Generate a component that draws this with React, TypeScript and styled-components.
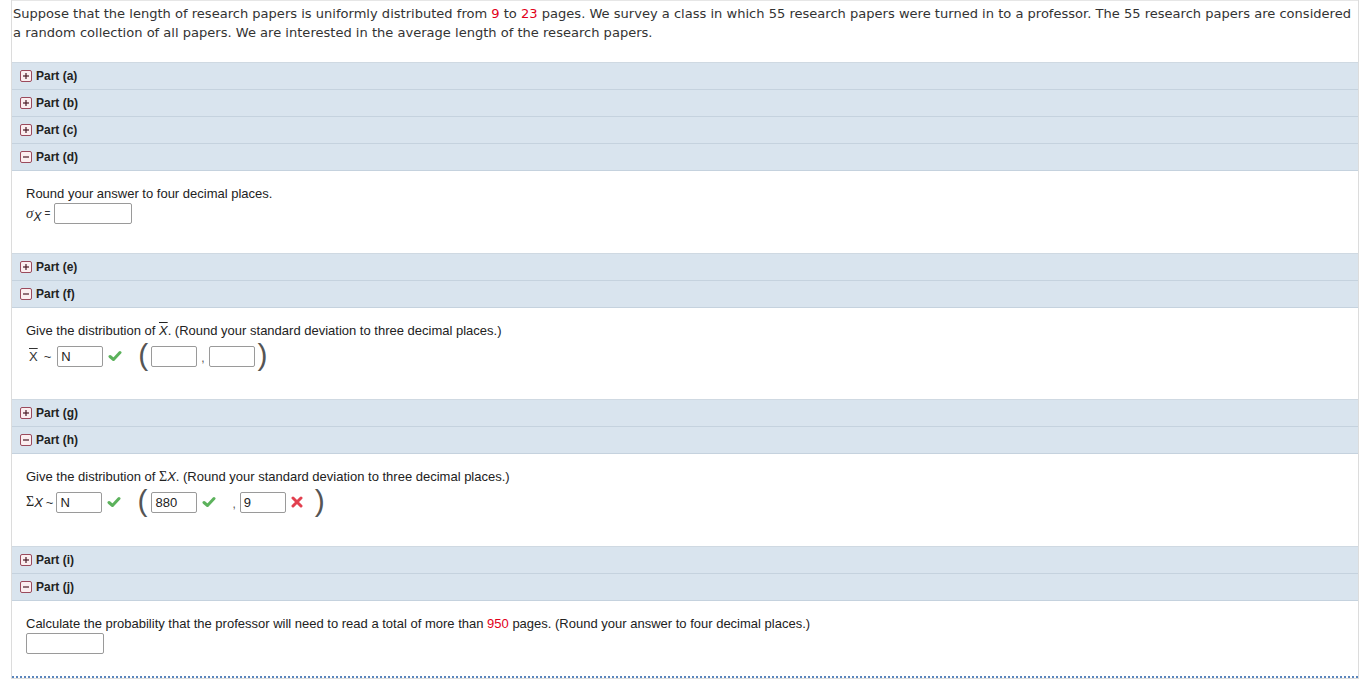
import React from "react";
import styled, { createGlobalStyle } from "styled-components";

const GlobalStyle = createGlobalStyle`
  html, body {
    margin: 0;
    padding: 0;
    background: #fff;
  }
`;

const Page = styled.div`
  margin-left: 11px;
  width: 1348px;
  border: 1px solid #dcdcdc;
  border-top: none;
  box-sizing: border-box;
`;

const Intro = styled.div`
  font-family: "DejaVu Sans", Verdana, sans-serif;
  font-size: 13.05px;
  line-height: 19px;
  color: #333;
  padding: 3px 2px 0 1px;
  height: 58px;
  border-top: 1px solid #e6e6e6;
  border-bottom: 1px solid #cfd9e2;
`;

const Red = styled.span`
  color: #e2001a;
`;

const PartHead = styled.div`
  display: flex;
  align-items: center;
  gap: 4px;
  height: 26px;
  padding-left: 8px;
  background: #d9e4ee;
  border-bottom: 1px solid #c5d2de;
  font-family: "Liberation Sans", Arial, sans-serif;
  font-weight: bold;
  font-size: 12px;
  color: #222;
`;

const Toggle = styled.span`
  display: inline-flex;
  width: 10px;
  height: 10px;
  border: 1px solid #9b4a5c;
  border-radius: 2px;
  background: #fbeef0;
`;

const Content = styled.div<{ $pb: number; $gap: number }>`
  display: flex;
  flex-direction: column;
  gap: ${({ $gap }) => $gap}px;
  padding: 15px 14px ${({ $pb }) => $pb}px;
  font-family: "Liberation Sans", Arial, sans-serif;
  font-size: 13px;
  color: #222;
  border-bottom: 1px solid #cfd9e2;
`;

const LastContent = styled(Content)`
  border-bottom: 2px dotted #5b86bd;
`;

const Line = styled.div`
  line-height: 15px;
`;

const Row = styled.div<{ $h?: number }>`
  display: flex;
  align-items: center;
  height: ${({ $h }) => $h ?? 30}px;
`;

const Box = styled.span<{ $w: number }>`
  display: inline-flex;
  align-items: center;
  box-sizing: border-box;
  width: ${({ $w }) => $w}px;
  height: 21px;
  padding-left: 3px;
  border: 1px solid #9a9a9a;
  border-radius: 2px;
  background: #fff;
  font-size: 13px;
  color: #222;
`;

const Paren = styled.span`
  font-family: "Liberation Sans", Arial, sans-serif;
  font-size: 30px;
  font-weight: 300;
  color: #555;
  line-height: 30px;
  margin-top: -3px;
`;

const Gap = styled.span<{ $w: number }>`
  display: inline-block;
  width: ${({ $w }) => $w}px;
`;

const Sigma = styled.span`
  font-family: "Liberation Serif", "Times New Roman", serif;
  font-style: italic;
  font-size: 15px;
  color: #333;
`;

const Sub = styled.span`
  font-family: "Liberation Sans", Arial, sans-serif;
  font-style: italic;
  font-size: 12px;
  position: relative;
  top: 3px;
`;

const Small = styled.span`
  font-size: 10px;
  color: #333;
  margin: 0 4px 0 3px;
`;

const Bar = styled.span`
  text-decoration: overline;
  font-style: italic;
`;

const BarPlain = styled.span`
  text-decoration: overline;
  color: #333;
`;

const SumSym = styled.span`
  font-family: "Liberation Serif", "Times New Roman", serif;
  font-size: 14px;
`;

const SumItal = styled.span`
  font-style: italic;
`;

const Tilde = styled.span<{ $m: number }>`
  margin: 0 ${({ $m }) => $m}px;
  color: #333;
`;

const Comma = styled.span`
  margin: 4px 4px 0 4px;
  font-size: 12px;
  color: #555;
`;

const Check = () => (
  <svg width="14" height="12" viewBox="0 0 14 12">
    <polyline
      points="2,6.5 5.5,9.5 12,2.5"
      fill="none"
      stroke="#5cb25c"
      strokeWidth="3"
      strokeLinecap="round"
      strokeLinejoin="round"
    />
  </svg>
);

const Cross = () => (
  <svg width="12" height="12" viewBox="0 0 12 12">
    <path d="M2 2 L10 10 M10 2 L2 10" stroke="#e2404f" strokeWidth="3" strokeLinecap="round" />
  </svg>
);

const Head = ({ label, open }: { label: string; open?: boolean }) => (
  <PartHead>
    <Toggle>
      <svg width="10" height="10" viewBox="0 0 10 10">
        <path d="M2 5 H8" stroke="#4a1a26" strokeWidth="1.2" />
        {!open && <path d="M5 2 V8" stroke="#4a1a26" strokeWidth="1.2" />}
      </svg>
    </Toggle>
    {label}
  </PartHead>
);

export default function App() {
  return (
    <>
      <GlobalStyle />
      <Page>
        <Intro>
          Suppose that the length of research papers is uniformly distributed from <Red>9</Red> to{" "}
          <Red>23</Red> pages. We survey a class in which 55 research papers were turned in to a
          professor. The 55 research papers are considered a random collection of all papers. We are
          interested in the average length of the research papers.
        </Intro>
        <Head label="Part (a)" />
        <Head label="Part (b)" />
        <Head label="Part (c)" />
        <Head label="Part (d)" open />
        <Content $pb={28} $gap={1}>
          <Line>Round your answer to four decimal places.</Line>
          <Row $h={23}>
            <Sigma>σ</Sigma>
            <Sub>X</Sub>
            <Small>=</Small>
            <Box $w={78} />
          </Row>
        </Content>
        <Head label="Part (e)" />
        <Head label="Part (f)" open />
        <Content $pb={28} $gap={3}>
          <Line>
            Give the distribution of <Bar>X</Bar>. (Round your standard deviation to three decimal
            places.)
          </Line>
          <Row>
            <Gap $w={3} />
            <BarPlain>X</BarPlain>
            <Tilde $m={6}>~</Tilde>
            <Box $w={46}>N</Box>
            <Gap $w={5} />
            <Check />
            <Gap $w={16} />
            <Paren>(</Paren>
            <Gap $w={3} />
            <Box $w={46} />
            <Comma>,</Comma>
            <Box $w={46} />
            <Gap $w={3} />
            <Paren>)</Paren>
          </Row>
        </Content>
        <Head label="Part (g)" />
        <Head label="Part (h)" open />
        <Content $pb={29} $gap={3}>
          <Line>
            Give the distribution of <SumSym>Σ</SumSym>
            <SumItal>X</SumItal>. (Round your standard deviation to three decimal places.)
          </Line>
          <Row>
            <SumSym>Σ</SumSym>
            <SumItal>X</SumItal>
            <Tilde $m={3}>~</Tilde>
            <Box $w={46}>N</Box>
            <Gap $w={5} />
            <Check />
            <Gap $w={16} />
            <Paren>(</Paren>
            <Gap $w={4} />
            <Box $w={46}>880</Box>
            <Gap $w={5} />
            <Check />
            <Gap $w={12} />
            <Comma>,</Comma>
            <Box $w={46}>9</Box>
            <Gap $w={5} />
            <Cross />
            <Gap $w={12} />
            <Paren>)</Paren>
          </Row>
        </Content>
        <Head label="Part (i)" />
        <Head label="Part (j)" open />
        <LastContent $pb={21} $gap={1}>
          <Line>
            Calculate the probability that the professor will need to read a total of more than{" "}
            <Red>950</Red> pages. (Round your answer to four decimal places.)
          </Line>
          <Row $h={23}>
            <Box $w={78} />
          </Row>
        </LastContent>
      </Page>
    </>
  );
}
